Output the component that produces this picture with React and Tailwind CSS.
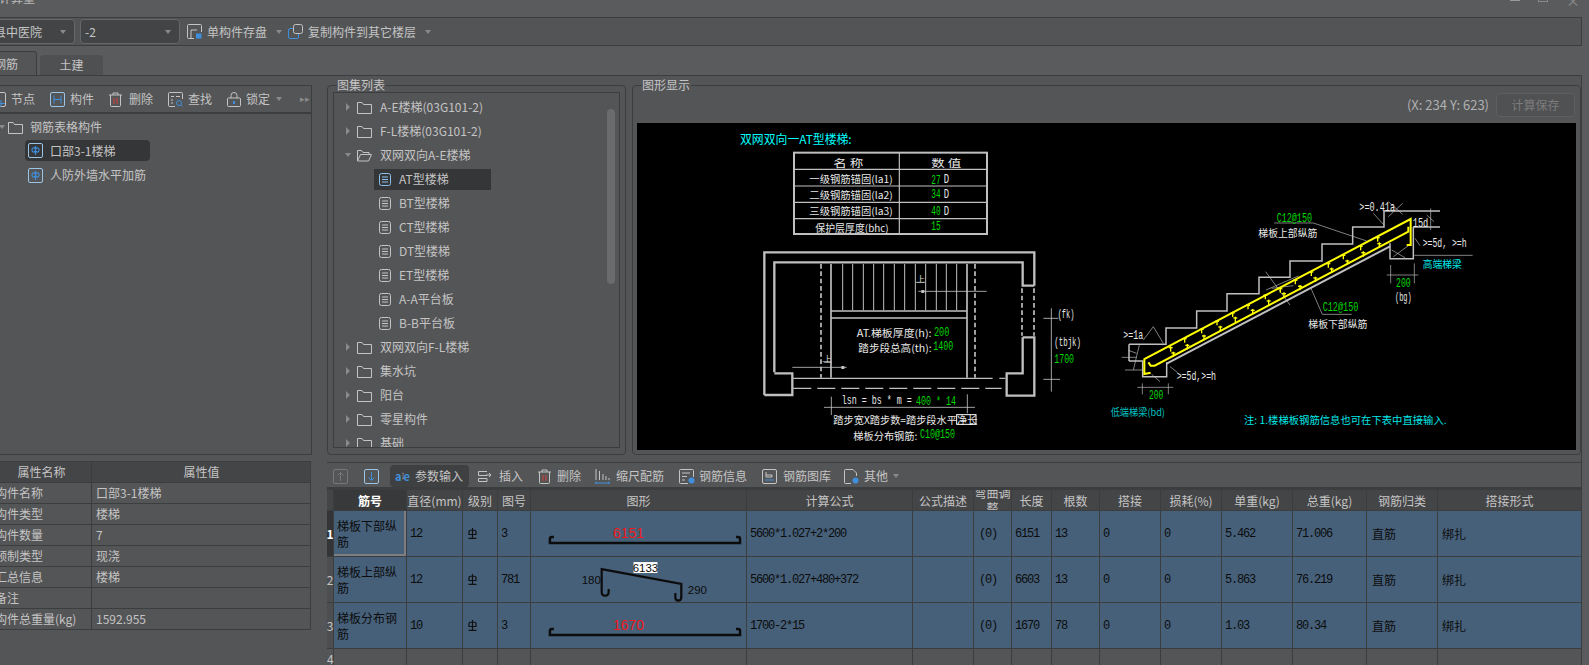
import React from "react";

const G = "#00d800";
const W = "#e8e8e8";
const C = "#00e8e8";
const L = "#c0c0c0";
const BLUE = "#3f8fdc";
const ST = "#c4c4c4";

// text in the cad drawing, stretched to the width it has in the picture
function T({ x, x2, y, c = W, s = 30, mono, children }) {
  return (
    <text
      x={x}
      y={y}
      textLength={x2 - x}
      lengthAdjust="spacingAndGlyphs"
      dominantBaseline="central"
      fontSize={mono ? s * 1.15 : s}
      fill={c}
      fontFamily={mono ? "Liberation Mono, monospace" : "Noto Sans CJK SC, sans-serif"}
    >
      {children}
    </text>
  );
}

function Lines({ w = 2, c = L, pts }) {
  return (
    <g stroke={c} strokeWidth={w} fill="none">
      {pts.map((p, i) => (
        <polyline key={i} points={p} />
      ))}
    </g>
  );
}

const topTicks = [[272,822],[314,795],[365,767],[411,743],[458,718],[504,695],[556,665],[601,645],[646,620],[694,595],[745,570],[790,545],[842,518],[893,492]];
const lowTicks = [[280,838],[322,815],[372,787],[421,760],[466,733],[518,710],[566,682],[612,660],[660,638],[706,613],[755,586],[802,562],[850,537],[898,510]];

function CadPlan() {
  return (
    <g transform="translate(630 75) scale(0.33333)">
      <T x={330} x2={665} y={192} c="#00ffff" s={36}>双网双向一AT型楼梯:</T>
      <rect x="492" y="233" width="579" height="244" fill="none" stroke={L} strokeWidth="6" />
      <Lines w={3.5} pts={["492,283 1071,283", "492,333 1071,333", "492,382 1071,382", "492,431 1071,431", "808,233 808,477"]} />
      <T x={610} x2={700} y={264}>名 称</T>
      <T x={904} x2={994} y={262}>数 值</T>
      <T x={538} x2={788} y={310}>一级钢筋锚固(la1)</T>
      <T x={538} x2={788} y={360}>二级钢筋锚固(la2)</T>
      <T x={538} x2={788} y={408}>三级钢筋锚固(la3)</T>
      <T x={556} x2={776} y={457}>保护层厚度(bhc)</T>
      <T x={904} x2={932} y={316} c={G} mono s={34}>27</T>
      <T x={941} x2={957} y={314} mono s={34}>D</T>
      <T x={904} x2={932} y={359} c={G} mono s={34}>34</T>
      <T x={941} x2={957} y={359} mono s={34}>D</T>
      <T x={904} x2={932} y={409} c={G} mono s={34}>40</T>
      <T x={941} x2={957} y={409} mono s={34}>D</T>
      <T x={904} x2={932} y={455} c={G} mono s={34}>15</T>

      <Lines
        w={7}
        pts={[
          "403,960 403,532 1213,532 1213,632",
          "433,892 433,562 1178,562 1178,632 1213,632",
          "403,960 487,960 487,895 433,895",
          "1178,787 1213,787 1213,962 1130,962 1130,895 1178,895 1178,787",
        ]}
      />
      <g stroke={L} strokeWidth="5" strokeDasharray="14 8" fill="none">
        <polyline points="1176,640 1176,782" />
        <polyline points="1212,640 1212,782" />
        <polyline points="573,567 573,908" />
        <polyline points="1035,567 1035,908" />
      </g>
      <Lines w={5} pts={["603,567 603,908", "1011,567 1011,908", "603,708 1011,708", "603,729 1011,729"]} />
      <Lines
        w={3}
        pts={[638, 668, 700, 731, 761, 793, 824, 856, 887, 919, 949, 980].map((x) => `${x},567 ${x},706`)}
      />
      <Lines w={3.5} pts={["490,910 1088,910", "1108,910 1126,910"]} />
      <g stroke={L} strokeWidth="3.5" strokeDasharray="54 18">
        <line x1="490" y1="940" x2="1115" y2="940" />
      </g>
      <T x={860} x2={884} y={612} s={24}>上</T>
      <Lines w={2.5} pts={["858,622 885,622", "865,649 1070,649", "578,860 605,860", "487,877 650,877"]} />
      <rect x="874" y="645" width="9" height="9" fill={L} />
      <rect x="634" y="873" width="9" height="9" fill={L} />
      <T x={581} x2={604} y={850} s={24}>上</T>
      <T x={680} x2={905} y={772}>AT.梯板厚度(h):</T>
      <T x={912} x2={958} y={772} c={G} mono s={34}>200</T>
      <T x={685} x2={905} y={817}>踏步段总高(th):</T>
      <T x={910} x2={970} y={815} c={G} mono s={34}>1400</T>
      <Lines w={2.5} pts={["1264,700 1264,950", "1240,730 1285,730", "1240,913 1290,913", "604,965 604,1020", "1012,958 1012,1015", "582,997 1035,997"]} />
      <T x={1283} x2={1333} y={721} mono s={32}>(fk)</T>
      <T x={1273} x2={1353} y={805} mono s={32}>(tbjk)</T>
      <T x={1273} x2={1332} y={853} c={G} mono s={34}>1700</T>
      <T x={635} x2={845} y={977} mono s={32}>lsn = bs * m =</T>
      <T x={858} x2={978} y={980} c={G} mono s={32}>400 * 14</T>
      <T x={610} x2={1042} y={1033}>踏步宽X踏步数=踏步段水平净长</T>
      <rect x="980" y="1019" width="58" height="29" fill="none" stroke="#fff" strokeWidth="3" />
      <T x={670} x2={862} y={1081}>梯板分布钢筋:</T>
      <T x={870} x2={975} y={1081} c={G} mono s={32}>C10@150</T>
    </g>
  );
}

function CadSection() {
  return (
    <g transform="translate(1080 75) scale(0.33333)">
      <Lines
        w={4.5}
        pts={[
          "147,808 258,808 258,759 350,759 350,708 441,708 441,656 537,656 537,607 630,607 630,558 726,558 726,507 818,507 818,456 912,456 912,408 1080,408",
          "1000,456 1080,456",
          "1000,456 1000,551 930,551 930,505",
          "147,858 188,858 188,905 260,905 260,862",
          "147,808 147,858",
        ]}
      />
      <Lines w={6} pts={["260,866 930,514"]} />
      <Lines
        w={2}
        pts={[
          "583,444 700,444 860,498",
          "815,718 727,718 693,640",
          "557,590 630,690",
          "558,645 655,603",
          "575,640 640,632",
          "880,415 912,450",
          "925,380 968,418",
          "968,385 925,425",
          "1052,400 1052,465",
          "1040,420 1062,440",
          "1003,541 1178,541",
          "1005,490 1020,512",
          "932,570 932,625",
          "1003,565 1003,625",
          "920,600 1015,600",
          "935,525 975,548",
          "985,512 940,545",
          "187,925 187,958",
          "265,925 265,958",
          "172,937 280,937",
          "190,795 220,755 250,805",
          "178,810 160,885",
          "125,847 170,847",
          "135,885 195,885",
          "145,826 170,835",
          "270,875 292,892",
          "215,898 240,920",
        ]}
      />
      <Lines w={6} c="#ffff00" pts={["212,893 193,897 193,852 992,432 992,510 980,510", "205,862 212,872 224,872 985,470 985,455"]} />
      <g stroke="#ffff00" strokeWidth="4">
        {topTicks.concat(lowTicks).map(([x, y]) => (
          <g key={`${x}-${y}`}>
            <line x1={x} y1={y - 8} x2={x} y2={y + 8} />
            <line x1={x - 6} y1={y - 4} x2={x + 6} y2={y - 4} />
          </g>
        ))}
      </g>
      <T x={590} x2={696} y={433} c={G} mono s={32}>C12@150</T>
      <T x={535} x2={712} y={473}>梯板上部纵筋</T>
      <T x={728} x2={835} y={700} c={G} mono s={32}>C12@150</T>
      <T x={685} x2={862} y={745}>梯板下部纵筋</T>
      <T x={838} x2={945} y={398} mono s={32}>{">=0.41a"}</T>
      <T x={998} x2={1045} y={447} mono s={32}>15d</T>
      <T x={1028} x2={1160} y={508} mono s={32}>{">=5d, >=h"}</T>
      <T x={1028} x2={1145} y={566} c={C}>高端梯梁</T>
      <T x={948} x2={992} y={626} c={G} mono s={32}>200</T>
      <T x={945} x2={995} y={670} mono s={32}>(bg)</T>
      <T x={130} x2={190} y={782} mono s={32}>{">=1a"}</T>
      <T x={290} x2={408} y={905} mono s={32}>{">=5d,>=h"}</T>
      <T x={207} x2={250} y={962} c={G} mono s={32}>200</T>
      <T x={92} x2={255} y={1010} c="#00c0c0">低端梯梁(bd)</T>
      <T x={492} x2={1100} y={1033} c={C}>注: 1.楼梯板钢筋信息也可在下表中直接输入.</T>
    </g>
  );
}

function Arrow() {
  return <span className="block w-0 h-0 border-x-[3.5px] border-x-transparent border-t-[4px] border-t-[#8a8a8a]" />;
}

function Svg({ w = 16, h = 16, children }) {
  return (
    <svg width={w} height={h} viewBox={`0 0 ${w} ${h}`} fill="none" stroke={ST} strokeWidth="1" className="shrink-0">
      {children}
    </svg>
  );
}

const Box = ({ w = 15, h = 15 }) => <rect x=".5" y=".5" width={w - 1} height={h - 1} rx="1.5" />;

function FolderIcon({ open }) {
  return (
    <Svg w={15} h={13}>
      {open ? (
        <path d="M.5 12V1.500h4l1.500 2h6v2M.5 12l3-6.500h11L11.500 12z" />
      ) : (
        <path d="M.5 1.500h4.500l1.500 2h8v9h-14z" />
      )}
    </Svg>
  );
}

function DocIcon({ blue }) {
  return (
    <Svg w={12} h={13}>
      <g stroke={blue ? "#8cc0ea" : ST}>
        <rect x=".5" y=".5" width="11" height="12" rx="2" />
        <path d="M3 4h6M3 6.500h6M3 9h6" />
      </g>
    </Svg>
  );
}

function PartIcon() {
  return (
    <Svg w={15} h={15}>
      <g stroke="#9cc4e4">
        <Box />
      </g>
      <path d="M7.500 3v9M7.500 6c-1.500-2-4-1-3.500 1.500s2.500 1.500 3.500 0c1 1.500 3 2.500 3.500 0S9 4 7.500 6" stroke={BLUE} strokeWidth="1.200" />
    </Svg>
  );
}

function SaveIcon() {
  return (
    <Svg w={15} h={15}>
      <path d="M7 14.500H1.500a1 1 0 0 1-1-1v-12a1 1 0 0 1 1-1h12a1 1 0 0 1 1 1V8M4 14V6h6" />
      <rect x="9" y="9.500" width="5.500" height="5" fill={BLUE} stroke="none" />
    </Svg>
  );
}

function CopyIcon() {
  return (
    <Svg w={15} h={15}>
      <rect x="5.500" y=".5" width="9" height="9" rx="2" />
      <path d="M5 4.500H2a1.500 1.500 0 0 0-1.500 1.500v7A1.500 1.500 0 0 0 2 14.500h7a1.500 1.500 0 0 0 1.500-1.500v-3" stroke={BLUE} />
    </Svg>
  );
}

function TrashIcon() {
  return (
    <Svg w={13} h={15}>
      <path d="M0 3h13M4 3V1h5v2M1.500 3v10.500a1 1 0 0 0 1 1h8a1 1 0 0 0 1-1V3" />
      <path d="M5 6v6M8 6v6" stroke="#d9403a" />
    </Svg>
  );
}

function Tool({ icon, label, gap = "gap-[5px]", children }) {
  return (
    <div className={`flex items-center ${gap} shrink-0`}>
      {icon}
      <span>{label}</span>
      {children}
    </div>
  );
}

const leftTools = [
  {
    label: "节点",
    icon: (
      <Svg w={15} h={15}>
        <Box />
        <path d="M10 8v7M7 11.500h7" stroke={BLUE} />
      </Svg>
    ),
  },
  {
    label: "构件",
    icon: (
      <Svg w={15} h={15}>
        <rect x=".5" y=".5" width="14" height="14" rx="1.500" stroke="#9cc4e4" />
        <path d="M4 3.500v8M11 3.500v8M4 7.500h7" stroke={BLUE} />
      </Svg>
    ),
  },
  {
    label: "删除",
    gap: "gap-[7px]",
    icon: <TrashIcon />,
  },
  {
    label: "查找",
    icon: (
      <Svg w={15} h={15}>
        <path d="M14.500 7V1.500a1 1 0 0 0-1-1h-12a1 1 0 0 0-1 1v12a1 1 0 0 0 1 1H7M3 4.500h3M8 4.500h4M3 8h2M3 11h2" />
        <circle cx="11" cy="11" r="2.500" stroke={BLUE} />
        <path d="M13 13l1.500 1.500" stroke={BLUE} />
      </Svg>
    ),
  },
  {
    label: "锁定",
    icon: (
      <Svg w={14} h={15}>
        <path d="M4 6V3.500a3 3 0 0 1 6 0V6" />
        <rect x=".5" y="6" width="13" height="8.500" rx="1" />
        <path d="M7 9v3" stroke={BLUE} strokeWidth="2" />
      </Svg>
    ),
  },
];

const tree = [
  { n: "A-E楼梯(03G101-2)", d: 0 },
  { n: "F-L楼梯(03G101-2)", d: 0 },
  { n: "双网双向A-E楼梯", d: 0, open: true },
  { n: "AT型楼梯", d: 1, sel: true },
  { n: "BT型楼梯", d: 1 },
  { n: "CT型楼梯", d: 1 },
  { n: "DT型楼梯", d: 1 },
  { n: "ET型楼梯", d: 1 },
  { n: "A-A平台板", d: 1 },
  { n: "B-B平台板", d: 1 },
  { n: "双网双向F-L楼梯", d: 0 },
  { n: "集水坑", d: 0 },
  { n: "阳台", d: 0 },
  { n: "零星构件", d: 0 },
  { n: "基础", d: 0 },
];

const attrs = [
  ["构件名称", "口部3-1楼梯"],
  ["构件类型", "楼梯"],
  ["构件数量", "7"],
  ["预制类型", "现浇"],
  ["汇总信息", "楼梯"],
  ["备注", ""],
  ["构件总重量(kg)", "1592.955"],
];

const COLS = "grid grid-cols-[7px_73px_56px_35px_33px_216px_166px_61px_38px_40px_48px_61px_61px_71px_74px_71px_144px]";
const heads = ["", "筋号", "直径(mm)", "级别", "图号", "图形", "计算公式", "公式描述", "弯曲调整", "长度", "根数", "搭接", "损耗(%)", "单重(kg)", "总重(kg)", "钢筋归类", "搭接形式"];

const bars = [
  { no: 1, name: "梯板下部纵筋", d: "12", fig: "3", shape: "6151", calc: "5600*1.027+2*200", len: "6151", cnt: "13", one: "5.462", tot: "71.006" },
  { no: 2, name: "梯板上部纵筋", d: "12", fig: "781", calc: "5600*1.027+480+372", len: "6603", cnt: "13", one: "5.863", tot: "76.219" },
  { no: 3, name: "梯板分布钢筋", d: "10", fig: "3", shape: "1670", calc: "1700-2*15", len: "1670", cnt: "78", one: "1.03", tot: "80.34" },
];

function GradeIcon() {
  return (
    <svg width="9" height="11" viewBox="0 0 9 11" fill="none" stroke="#111" strokeWidth="1.200" className="block">
      <path d="M1 3.500C1 2.500 2 2 4.500 2S8 2.500 8 3.500v3H1zM4.500 0v10M.5 10.300h8" />
    </svg>
  );
}

function StraightShape({ label }) {
  return (
    <svg width="216" height="46" viewBox="0 0 216 46" className="block">
      <path d="M23 26h-2a2 2 0 0 0-2 2v4h191v-4a2 2 0 0 0-2-2h-2" fill="none" stroke="#0c0c0c" strokeWidth="2.500" />
      <text x="98" y="27" textAnchor="middle" fontSize="14" fill="#f01818" fontFamily="Liberation Sans, sans-serif">{label}</text>
    </svg>
  );
}

function BentShape() {
  return (
    <svg width="216" height="46" viewBox="0 0 216 46" className="block">
      <path d="M78 32v3c0 5-7 5-7 0V12L151 27v13c0 5-6 5-6 0v-4" fill="none" stroke="#0c0c0c" strokeWidth="2.200" />
      <rect x="103" y="5" width="24" height="11" fill="#fff" />
      <g fontSize="11.500" fontFamily="Liberation Sans, sans-serif" fill="#0c0c0c">
        <text x="115" y="14.500" textAnchor="middle">6133</text>
        <text x="51" y="27">180</text>
        <text x="157.500" y="37">290</text>
      </g>
    </svg>
  );
}

function Val({ children, className = "" }) {
  return (
    <div className={`border-r border-b border-[#3c3d3f] bg-[#46607a] text-[#0c0c0c] flex items-center pl-[3px] overflow-hidden ${className}`}>
      {children}
    </div>
  );
}

const mono = "font-['Liberation_Mono',monospace] tracking-[-1.2px]";

function BarRow({ b }) {
  return (
    <div className={`${COLS} h-[46px]`}>
      <div className={`border-r border-b border-[#3c3d3f] flex items-center justify-center text-[12px] ${b.no === 1 ? "bg-[#333436] text-white font-bold" : "bg-[#4d4e50]"}`}>
        {b.no}
      </div>
      <Val className={`leading-[16px] ${b.no === 1 ? "shadow-[inset_-2px_-2px_0_#7d7e80]" : ""}`}>
        <span className="break-all">{b.name}</span>
      </Val>
      <Val className={mono}>{b.d}</Val>
      <Val><span className="ml-[2px]"><GradeIcon /></span></Val>
      <Val className={mono}>{b.fig}</Val>
      <Val className="!pl-0">{b.shape ? <StraightShape label={b.shape} /> : <BentShape />}</Val>
      <Val className={mono}>{b.calc}</Val>
      <Val />
      <Val className={mono}><span className="ml-0.5">(0)</span></Val>
      <Val className={mono}>{b.len}</Val>
      <Val className={mono}>{b.cnt}</Val>
      <Val className={mono}>0</Val>
      <Val className={mono}>0</Val>
      <Val className={mono}>{b.one}</Val>
      <Val className={mono}>{b.tot}</Val>
      <Val className="!pl-[5px]">直筋</Val>
      <Val className="!pl-[4px]">绑扎</Val>
    </div>
  );
}

const barTools = [
  { label: "插入", w: "ml-[9px]", gap: "gap-[7px]", icon: (
    <Svg w={14} h={13}>
      <path d="M9 1.500H.5v4H9M.5 8.500H9v3H.5zM8 5h5M11 3l2 2-2 2" />
    </Svg>
  ) },
  { label: "删除", w: "ml-[15px]", gap: "gap-[6px]", icon: <TrashIcon /> },
  { label: "缩尺配筋", w: "ml-[14px]", gap: "gap-[6px]", icon: (
    <Svg w={15} h={15}>
      <path d="M1 0v11M4.500 2v9M8 5v6M11 7v4M14 9v2" />
      <path d="M0 14h15M1 12.500v3M14 12.500v3" stroke={BLUE} />
    </Svg>
  ) },
  { label: "钢筋信息", w: "ml-[15px]", gap: "gap-[4px]", icon: (
    <Svg w={16} h={15}>
      <path d="M9 14.500H1.500a1 1 0 0 1-1-1v-12a1 1 0 0 1 1-1h12a1 1 0 0 1 1 1V8M3 4h8M3 7.500h5M3 11h3" />
      <circle cx="12.500" cy="11.500" r="3" fill={BLUE} stroke="none" />
    </Svg>
  ) },
  { label: "钢筋图库", w: "ml-[15px]", gap: "gap-[6px]", icon: (
    <Svg w={15} h={15}>
      <Box />
      <path d="M4 3v5h6V6H4" />
      <path d="M3 11h9" stroke={BLUE} />
    </Svg>
  ) },
  { label: "其他", w: "ml-[13px]", gap: "gap-[5px]", icon: (
    <Svg w={15} h={15}>
      <path d="M7 14.500H1.500a1 1 0 0 1-1-1v-12a1 1 0 0 1 1-1H9l3.500 3.500v3" />
      <circle cx="11.500" cy="11.500" r="3" fill={BLUE} stroke="none" />
    </Svg>
  ) },
];

export default function App() {
  return (
    <div className="w-[1589px] h-[665px] overflow-hidden bg-[#5a5b5c] text-[12px] text-[#c4c4c4] flex flex-col font-['Noto_Sans_CJK_SC',sans-serif]">
      {/* title bar, cut by the top of the picture */}
      <div className="h-[17px] shrink-0 relative">
        <span className="absolute -left-px top-[-10px] leading-[16px] text-[#b8b8b8]">计算量</span>
        <span className="absolute left-[1510px] top-0 w-[10px] h-[1px] bg-[#9a9a9a]" />
        <span className="absolute left-[1538px] -top-2 w-[10px] h-[10px] border border-[#8a8a8a]" />
        <span className="absolute left-[1566px] -top-[7px] leading-[14px] text-[14px] text-[#8a8a8a]">×</span>
      </div>

      {/* top toolbar */}
      <div className="h-[29px] shrink-0 mr-[7px] border-y border-r border-[#3c3d3f] bg-[#535456] flex items-center">
        <div className="w-[75px] h-[25px] shrink-0 rounded-r border border-l-0 border-[#66676a] bg-[#434446] flex items-center justify-between pr-2 overflow-hidden">
          <span className="-ml-[6px] whitespace-nowrap">县中医院</span>
          <Arrow />
        </div>
        <div className="ml-[5px] w-[100px] h-[25px] shrink-0 rounded border border-[#66676a] bg-[#434446] flex items-center justify-between px-[4px] pr-2">
          <span>-2</span>
          <Arrow />
        </div>
        <div className="ml-[7px]">
          <Tool icon={<SaveIcon />} label="单构件存盘">
            <span className="ml-1"><Arrow /></span>
          </Tool>
        </div>
        <div className="ml-[6px]">
          <Tool icon={<CopyIcon />} label="复制构件到其它楼层">
            <span className="ml-1"><Arrow /></span>
          </Tool>
        </div>
      </div>

      {/* tabs */}
      <div className="h-[29px] shrink-0 mr-[7px] flex items-end">
        <div className="w-[37px] h-[24px] shrink-0 bg-[#545557] border-t border-r border-[#3c3d3f] rounded-tr flex items-center overflow-hidden">
          <span className="-ml-[6px] whitespace-nowrap">钢筋</span>
        </div>
        <div className="ml-[3px] w-[63px] h-[20px] shrink-0 bg-[#4f5052] rounded-t flex items-center justify-center">土建</div>
      </div>

      {/* main area */}
      <div className="flex-1 min-h-0 mr-[7px] border-t border-r border-[#3c3d3f] bg-[#545557] flex pt-[9px]">
        {/* left column */}
        <div className="w-[312px] shrink-0 flex flex-col overflow-hidden">
          <div className="h-[370px] shrink-0 border-y border-r border-[#3c3d3f] flex flex-col">
            <div className="h-[28px] shrink-0 border-b-2 border-[#3c3d3f] flex items-center gap-[15px] -ml-[9px] relative">
              {leftTools.map((t) => (
                <Tool key={t.label} {...t} />
              ))}
              <span className="-ml-[9px]"><Arrow /></span>
              <span className="absolute left-[309px] top-[6px] text-[9px] text-[#8a8a8a]">▸▸</span>
            </div>
            <div className="pt-px">
              <div className="h-[24px] flex items-center whitespace-nowrap">
                <span className="mr-[3px] -ml-[1px]"><Arrow /></span>
                <FolderIcon />
                <span className="ml-[7px]">钢筋表格构件</span>
              </div>
              <div className="ml-[25px] w-[125px] h-[21px] mt-[1px] mb-[2px] rounded bg-[#353638] flex items-center pl-[3px] gap-[7px]">
                <PartIcon />
                <span>口部3-1楼梯</span>
              </div>
              <div className="ml-[28px] h-[24px] flex items-center gap-[7px]">
                <PartIcon />
                <span>人防外墙水平加筋</span>
              </div>
            </div>
          </div>

          {/* attributes */}
          <div className="mt-[6px] w-[311px] border-t border-r border-[#3c3d3f] flex flex-col overflow-hidden">
            <div className="grid grid-cols-[100px_1fr] -ml-[8px] w-[319px] h-[21px] bg-[#444547] border-b border-[#3c3d3f]">
              <div className="border-r border-[#3c3d3f] flex items-center justify-center">属性名称</div>
              <div className="flex items-center justify-center">属性值</div>
            </div>
            {attrs.map(([k, v]) => (
              <div key={k} className="grid grid-cols-[100px_1fr] -ml-[8px] w-[319px] h-[21px] border-b border-[#3c3d3f]">
                <div className="border-r border-[#3c3d3f] flex items-center pl-[3px] whitespace-nowrap">{k}</div>
                <div className="flex items-center pl-1">{v}</div>
              </div>
            ))}
          </div>
        </div>

        {/* right column */}
        <div className="flex-1 min-w-0 ml-[15px] flex flex-col">
          <div className="h-[370px] shrink-0 flex gap-[6px]">
            <div className="relative w-[299px] shrink-0 border border-[#3c3d3f] rounded px-[5px] pt-[6px] pb-[6px]">
              <span className="absolute left-[9px] -top-[9px] leading-[16px] bg-[#545557] pr-px">图集列表</span>
              <div className="relative h-full border border-[#3c3d3f] pt-[2px] overflow-hidden">
                {tree.map((t) => (
                  <div key={t.n} className="h-[24px] flex items-center whitespace-nowrap">
                    {t.d === 0 ? (
                      <>
                        {t.open ? (
                          <span className="ml-[11px] mr-[6px]"><Arrow /></span>
                        ) : (
                          <span className="ml-[12px] mr-[7px] w-0 h-0 border-y-[4px] border-y-transparent border-l-[4px] border-l-[#8a8a8a]" />
                        )}
                        <FolderIcon open={t.open} />
                        <span className="ml-[8px]">{t.n}</span>
                      </>
                    ) : (
                      <div className={`ml-[40px] w-[117px] h-[21px] pl-[5px] flex items-center gap-[8px] ${t.sel ? "bg-[#353638]" : ""}`}>
                        <DocIcon blue={t.sel} />
                        <span>{t.n}</span>
                      </div>
                    )}
                  </div>
                ))}
                <span className="absolute left-[273px] top-[16px] w-[8px] h-[175px] rounded bg-[#6a6b6d]" />
              </div>
            </div>

            <div className="relative flex-1 min-w-0 border border-[#3c3d3f] rounded px-[4px] pb-[4px] flex flex-col">
              <span className="absolute left-[9px] -top-[9px] leading-[16px] bg-[#545557] pr-px">图形显示</span>
              <div className="h-[37px] shrink-0 flex items-center justify-end gap-[7px]">
                <span className="text-[13px] text-[#b0b0b0]">(X: 234 Y: 623)</span>
                <div className="w-[79px] h-[24px] mr-[1px] rounded border border-[#5e5f61] bg-[#505153] text-[#7c7c7c] flex items-center justify-center">
                  计算保存
                </div>
              </div>
              <svg viewBox="637 123 939 327" className="block w-[939px] h-[327px] bg-black shrink-0">
                <CadPlan />
                <CadSection />
              </svg>
            </div>
          </div>

          {/* rebar table */}
          <div className="mt-[7px] flex-1 min-h-0 border-t border-[#3c3d3f] flex flex-col overflow-hidden">
            <div className="h-[26px] shrink-0 border-b-2 border-[#3c3d3f] flex items-center pl-[6px] pt-[2px]">
              <Svg w={15} h={15}>
                <g stroke="#77787a">
                  <Box />
                  <path d="M7.500 12V3.500M4.500 6.500l3-3 3 3" />
                </g>
              </Svg>
              <div className="ml-[16px]">
                <Svg w={15} h={15}>
                  <g stroke="#9cc4e4">
                    <Box />
                  </g>
                  <path d="M7.500 3v8.500M4.500 8.500l3 3 3-3" stroke={BLUE} />
                </Svg>
              </div>
              <div className="ml-[11px] w-[79px] h-[22px] rounded bg-[#3f4042] flex items-center pl-[5px] gap-[5px]">
                <div className="w-[15px] flex items-center justify-between text-[11px] font-bold text-[#3f8fdc] leading-none">
                  <span>a</span>
                  <svg width="5" height="14" viewBox="0 0 5 14" fill="none" stroke={ST} strokeWidth="1">
                    <path d="M0 .5h5M0 13.500h5M2.500 .5v13" />
                  </svg>
                  <span>e</span>
                </div>
                <span>参数输入</span>
              </div>
              {barTools.map((t) => (
                <div key={t.label} className={t.w}>
                  <Tool icon={t.icon} label={t.label} gap={t.gap} />
                </div>
              ))}
              <span className="ml-[5px]"><Arrow /></span>
            </div>

            <div className={`${COLS} h-[22px] shrink-0 bg-[#444547] border-t border-[#3c3d3f]`}>
              {heads.map((h, i) => (
                <div
                  key={i}
                  className={`border-r border-b border-[#3c3d3f] flex items-center justify-center text-center overflow-hidden leading-[15px] ${i === 1 ? "bg-[#38393b] text-white font-bold" : ""}`}
                >
                  {h}
                </div>
              ))}
            </div>
            {bars.map((b) => (
              <BarRow key={b.no} b={b} />
            ))}
            <div className={`${COLS} h-[46px]`}>
              {heads.map((h, i) => (
                <div key={i} className="border-r border-[#3c3d3f] text-[12px] text-center leading-[20px]">
                  {i === 0 ? "4" : ""}
                </div>
              ))}
            </div>
          </div>
        </div>
      </div>
    </div>
  );
}
